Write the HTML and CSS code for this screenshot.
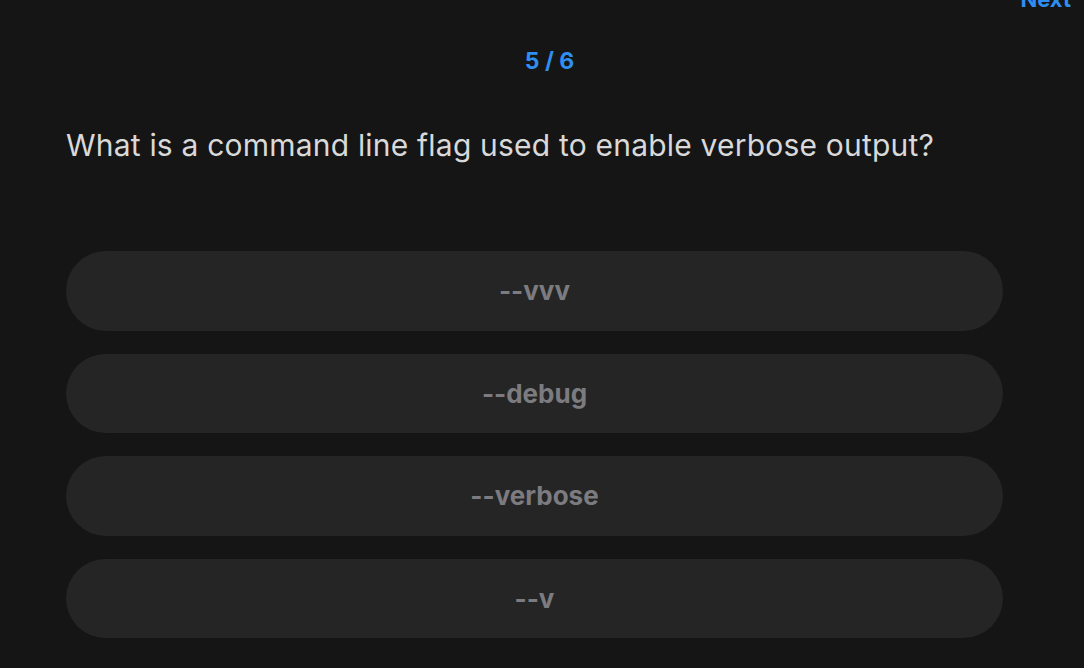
FILE: index.html
```html
<!DOCTYPE html>
<html>
<head>
<meta charset="utf-8">
<link rel="stylesheet" href="styles.css">
</head>
<body>
<div class="page">
  <div class="topbar"><span class="next">Next</span></div>
  <div class="counter">5 / 6</div>
  <h1 class="question">What is a command line flag used to enable verbose output?</h1>
  <div class="options">
    <button class="option">--vvv</button>
    <button class="option">--debug</button>
    <button class="option">--verbose</button>
    <button class="option">--v</button>
  </div>
</div>
</body>
</html>
```
FILE: styles.css
```css
html, body {
  margin: 0;
  padding: 0;
  background: #151515;
  font-family: Inter, "Noto Sans", sans-serif;
}
.page {
  width: 1084px;
  height: 668px;
  overflow: hidden;
  display: flex;
  flex-direction: column;
  padding: 0 81px 0 66px;
  box-sizing: border-box;
}
.topbar {
  display: flex;
  justify-content: flex-end;
  height: 0;
  margin-right: -68px;
}
.next {
  color: #2f8ff0;
  font-weight: 700;
  font-size: 22px;
  line-height: 26px;
  margin-top: -14px;
}
.counter {
  text-align: center;
  color: #2f8ff0;
  font-weight: 700;
  font-size: 23px;
  line-height: 28px;
  margin-top: 47px;
  padding-left: 30px;
}
.question {
  margin: 52px 0 0 0;
  color: #d9d9d9;
  font-weight: 400;
  font-size: 30px;
  line-height: 36px;
  letter-spacing: 0.2px;
}
.options {
  display: flex;
  flex-direction: column;
  gap: 23px;
  margin-top: 88px;
}
.option {
  height: 79.6px;
  border: none;
  border-radius: 40px;
  background: #252525;
  color: #7b7b80;
  font-family: Inter, "Noto Sans", sans-serif;
  font-weight: 700;
  font-size: 26px;
  padding: 0;
}
```
